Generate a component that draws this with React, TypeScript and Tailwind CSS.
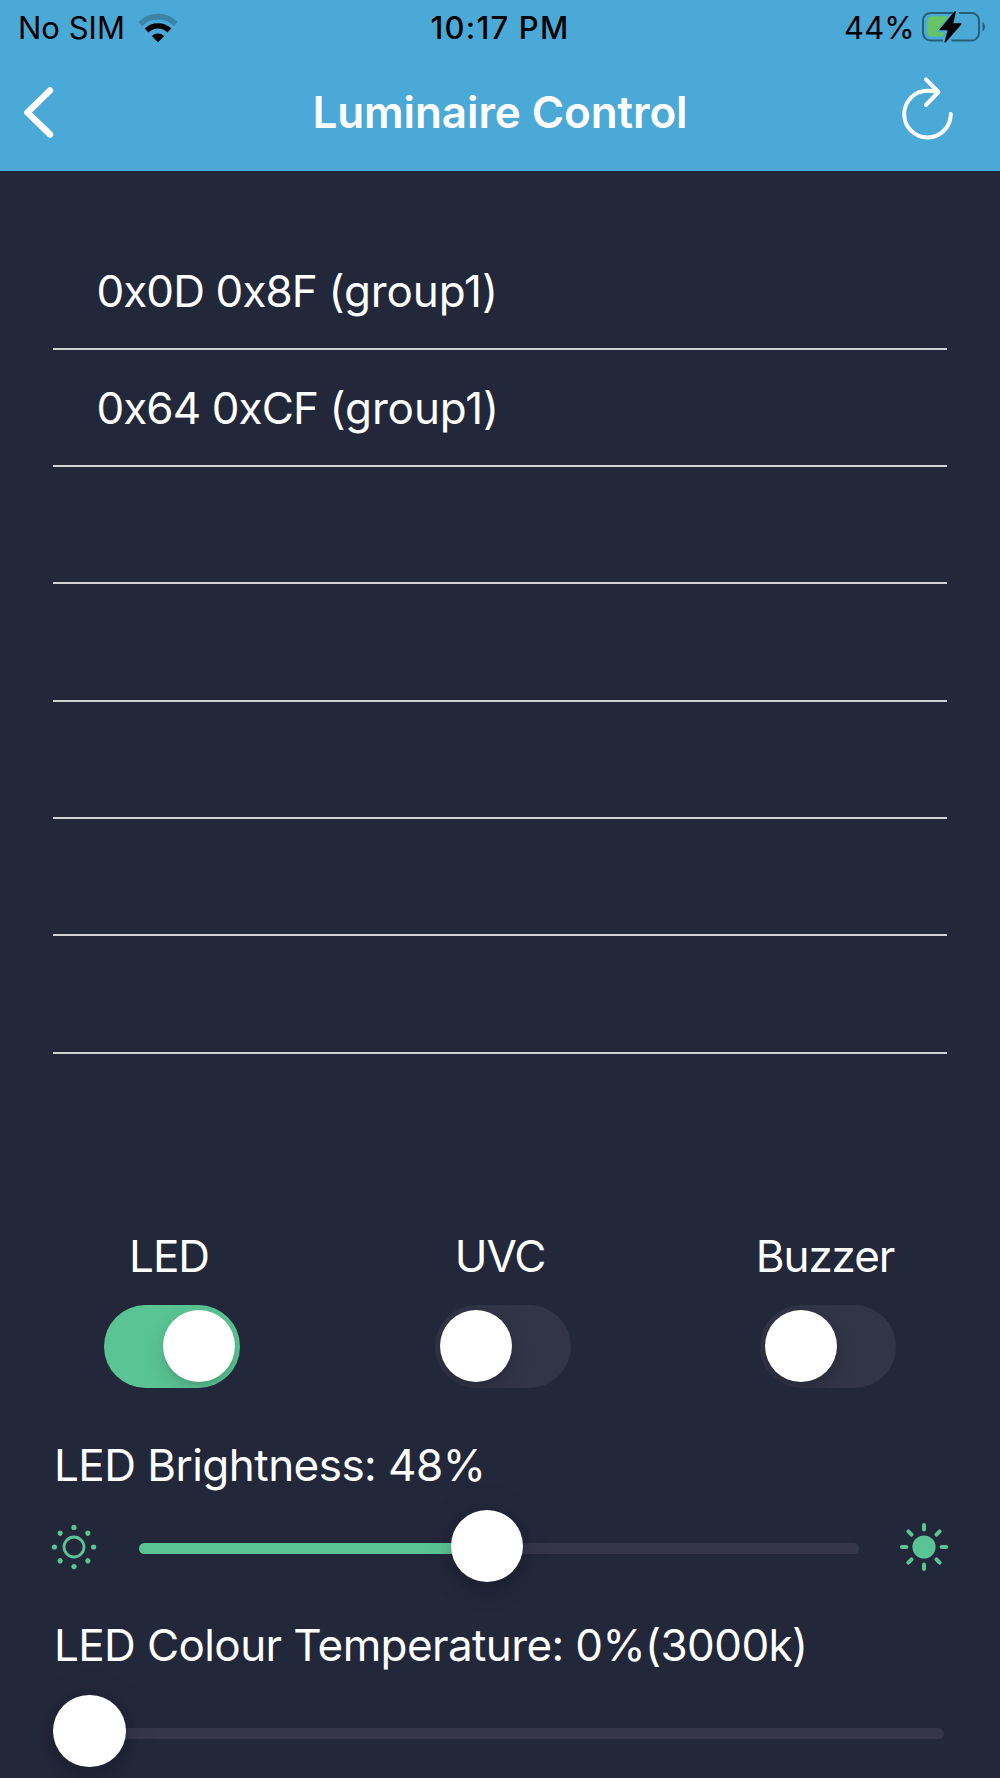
import React, { useState } from 'react';

interface Device {
  address: string;
  group: string;
}

const devices: (Device | null)[] = [
  { address: '0x0D 0x8F', group: 'group1' },
  { address: '0x64 0xCF', group: 'group1' },
  null,
  null,
  null,
  null,
  null,
];

const rayAngles = [0, 45, 90, 135, 180, 225, 270, 315];

const WifiIcon = () => (
  <svg width="40" height="30" viewBox="0 0 40 30" fill="none">
    <path d="M2.4 10.9 A25 25 0 0 1 37.6 10.9" stroke="#000" strokeOpacity="0.22" strokeWidth="5.6" />
    <path d="M8.6 17.5 A16.3 16.3 0 0 1 31.4 17.5" stroke="#000" strokeWidth="5.4" />
    <path d="M20 29.3 L13.8 22.9 A9 9 0 0 1 26.2 22.9 Z" fill="#000" />
  </svg>
);

const BatteryIcon = () => (
  <svg width="64" height="32" viewBox="0 0 64 32" fill="none">
    <path d="M32 1.9 H9.5 A7.5 7.5 0 0 0 2 9.4 V22.1 A7.5 7.5 0 0 0 9.5 29.6 H22" stroke="#000" strokeOpacity="0.45" strokeWidth="2" />
    <path d="M38 1.9 H50.5 A7.5 7.5 0 0 1 58 9.4 V22.1 A7.5 7.5 0 0 1 50.5 29.6 H30.5" stroke="#000" strokeOpacity="0.45" strokeWidth="2" />
    <path d="M61.5 11 C64.7 12.6 64.7 18.9 61.5 20.5 Z" fill="#000" fillOpacity="0.45" />
    <path d="M27.5 5.3 L16.8 19.3 Q15.8 21.5 18.2 21.6 L23.6 21.6 L22 25.4 H10.3 A4 4 0 0 1 6.3 21.4 V9.8 A4.5 4.5 0 0 1 10.8 5.3 Z" fill="#65C466" />
    <path d="M34.2 0.8 L19.2 18.6 H27.6 L24.2 30.9 L39.8 13 H31.4 Z" fill="#000" stroke="#000" strokeWidth="1.4" strokeLinejoin="round" />
  </svg>
);

const DimSunIcon = () => (
  <svg width="46" height="46" viewBox="-23 -23 46 46" className="text-[#5ac494]">
    <circle r="10" fill="none" stroke="currentColor" strokeWidth="2.8" />
    {rayAngles.map((deg) => (
      <circle key={deg} cx="19.6" r="2.6" fill="currentColor" transform={`rotate(${deg})`} />
    ))}
  </svg>
);

const BrightSunIcon = () => (
  <svg width="50" height="50" viewBox="-25 -25 50 50" className="text-[#5ac494]">
    <circle r="11.6" fill="currentColor" />
    {rayAngles.map((deg) => (
      <line
        key={deg}
        x1="17.6"
        x2="22.1"
        stroke="currentColor"
        strokeWidth="4"
        strokeLinecap="round"
        transform={`rotate(${deg})`}
      />
    ))}
  </svg>
);

const StatusBar = () => (
  <div className="grid h-[55px] grid-cols-[1fr_auto_1fr] items-center px-[15.5px] text-[31px] leading-none text-black">
    <div className="flex items-center pl-[2.5px]">
      <span>No SIM</span>
      <span className="ml-[13px]">
        <WifiIcon />
      </span>
    </div>
    <span className="font-[550] tracking-[1.2px]">10:17 PM</span>
    <div className="flex items-center justify-end">
      <span className="mr-[5.5px] tracking-[0.2px]">44%</span>
      <span className="-mt-[2px]">
        <BatteryIcon />
      </span>
    </div>
  </div>
);

const NavBar = () => (
  <div className="grid h-[114px] grid-cols-[1fr_auto_1fr] items-center text-white">
    <button className="ml-[20px] w-fit" aria-label="Back">
      <svg width="36" height="54" viewBox="0 0 36 54" fill="none">
        <path d="M30 5.5 L7.4 27.5 L30 49.4" stroke="currentColor" strokeWidth="6.4" strokeLinecap="round" strokeLinejoin="round" />
      </svg>
    </button>
    <h1 className="text-[44px] font-[580] leading-none tracking-[-0.1px]">Luminaire Control</h1>
    <button className="mr-[46px] w-fit justify-self-end" aria-label="Refresh">
      <svg width="54" height="72" viewBox="0 0 54 72" fill="none" stroke="currentColor" strokeWidth="4" strokeLinecap="round">
        <path d="M50.8 38 A23.3 23.3 0 1 1 27.5 14.8 Q33 14.8 37.5 16" />
        <path d="M26 3.4 L38.4 16 L26 29" strokeLinejoin="round" />
      </svg>
    </button>
  </div>
);

interface ToggleProps {
  label: string;
  on: boolean;
  onChange: () => void;
  className?: string;
}

const Toggle: React.FC<ToggleProps> = ({ label, on, onChange, className = '' }) => (
  <div className={`flex w-[136px] flex-col items-center ${className}`}>
    <span className="mr-[6px] whitespace-nowrap leading-[60px] tracking-[-1.1px]">{label}</span>
    <button
      role="switch"
      aria-checked={on}
      aria-label={label}
      onClick={onChange}
      className={`mt-[19px] flex h-[83px] w-[136px] items-center overflow-hidden rounded-full px-[5px] ${
        on ? 'justify-end bg-[#5ac494]' : 'justify-start bg-[#323447]'
      }`}
    >
      <span className="size-[72px] rounded-full bg-white shadow-[0_8px_21px_rgba(0,0,0,0.15),0_3px_3px_rgba(0,0,0,0.06)]" />
    </button>
  </div>
);

interface SliderProps {
  value: number;
  className?: string;
}

// The thumb travels inside the track, so its centre is offset by its own width
const Slider: React.FC<SliderProps> = ({ value, className = '' }) => (
  <div className={`relative flex h-[72px] shrink-0 items-center ${className}`}>
    <div className="mt-[5px] h-[11px] w-full overflow-hidden rounded-full bg-[#353749]">
      <div className="h-full bg-[#5ac494]" style={{ width: value > 0 ? `${value}%` : 0 }} />
    </div>
    <div
      className="absolute top-0 size-[72.5px] rounded-full bg-white shadow-[0_2px_35px_rgba(0,0,0,0.12),0_9px_14px_rgba(0,0,0,0.12)]"
      style={{ left: `calc((100% - 71px) * ${value / 100})` }}
    />
  </div>
);

export default function App() {
  const [led, setLed] = useState(true);
  const [uvc, setUvc] = useState(false);
  const [buzzer, setBuzzer] = useState(false);
  const brightness = 48;
  const temperature = 0;

  return (
    <div className="h-[1778px] w-[1000px] overflow-hidden bg-[#23273a] font-['Inter',sans-serif] text-[44px] text-white">
      <header className="h-[171px] bg-[#4aa9d7]">
        <StatusBar />
        <NavBar />
      </header>

      <ul className="mx-[53.4px] mt-[61.3px]">
        {devices.map((device, i) => (
          <li
            key={i}
            className="flex h-[117.33px] items-center whitespace-pre border-b-2 border-[#d0d1d6] pl-[43px] pt-[2px] leading-none"
          >
            {device && (
              <>
                <span className="tracking-[-0.9px]">{device.address} </span>
                <span className="tracking-[-0.1px]">({device.group})</span>
              </>
            )}
          </li>
        ))}
      </ul>

      <div className="mt-[172.1px] flex pl-[104px]">
        <Toggle label="LED" on={led} onChange={() => setLed(!led)} />
        <Toggle label="UVC" on={uvc} onChange={() => setUvc(!uvc)} className="ml-[195px]" />
        <Toggle label="Buzzer" on={buzzer} onChange={() => setBuzzer(!buzzer)} className="ml-[189px]" />
      </div>

      <section className="mt-[47.3px] px-[53px]">
        <p className="ml-[1px] leading-[60px] tracking-[-0.54px]">LED Brightness: {brightness}%</p>
        <div className="mt-[15px] flex items-center">
          <div className="-ml-[2px] mt-[3px] shrink-0">
            <DimSunIcon />
          </div>
          <Slider value={brightness} className="ml-[42px] w-[720px]" />
          <div className="ml-[40px] mt-[2px] shrink-0">
            <BrightSunIcon />
          </div>
        </div>
      </section>

      <section className="mt-[33px] px-[53px]">
        <p className="ml-[1px] leading-[60px] tracking-[-0.61px]">
          LED Colour Temperature: {temperature}%({3000}k)
        </p>
        <Slider value={temperature} className="mt-[20px] w-[891px]" />
      </section>
    </div>
  );
}
